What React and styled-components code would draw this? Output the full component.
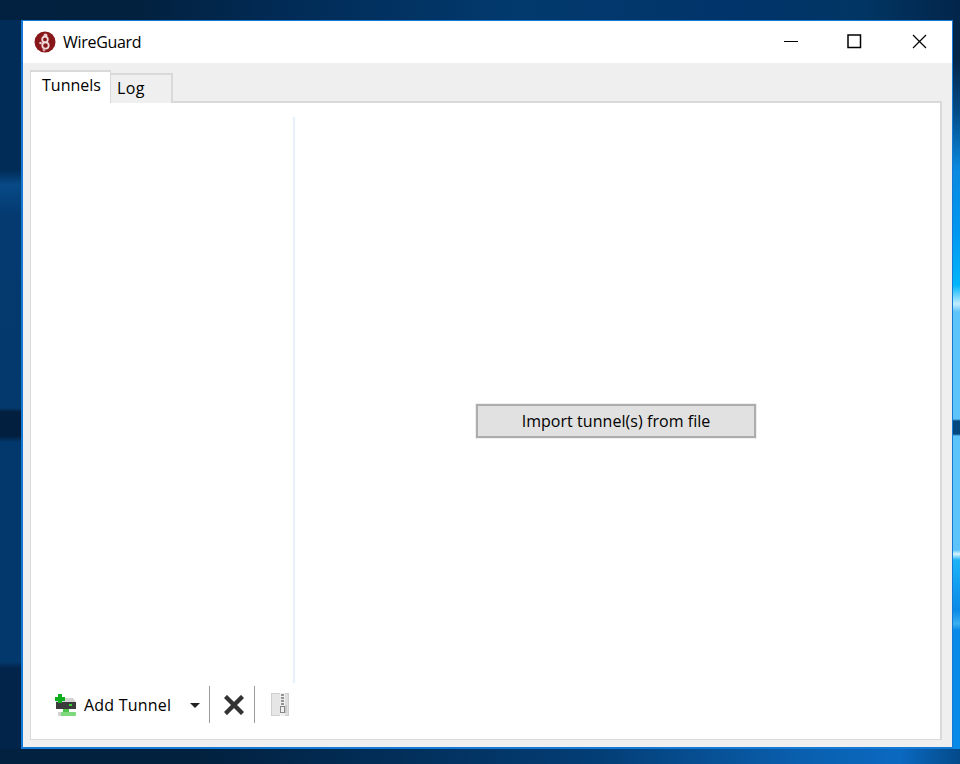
import styled, { createGlobalStyle } from 'styled-components';

const GlobalStyle = createGlobalStyle`
  html, body {
    margin: 0;
    height: 100%;
  }
  body {
    overflow: hidden;
    font-family: "Open Sans", "Noto Sans", sans-serif;
    color: #000;
    background:
      linear-gradient(90deg, #02203f 0, #02213f 140px, #012c58 300px, #023a6e 520px, #01346a 740px, #013664 860px, #02254a 960px) 0 0 / 100% 20px no-repeat,
      linear-gradient(90deg, #02203f 0, #02213f 200px, #022f5a 400px, #033e76 600px, #0a5fae 800px, #0a69c0 900px, #044a8a 960px) 0 100% / 100% 15px no-repeat,
      linear-gradient(180deg, #012c58 0, #012c58 170px, #074a86 185px, #043a70 215px, #03396b 408px, #021f3f 412px 436px, #03386c 442px, #03386c 662px, #02244a 668px) 0 0 / 21px 100% no-repeat,
      linear-gradient(180deg, #02254a 0, #02254a 60px, #034a85 110px, #0b8ae0 170px, #0096f0 230px, #00b5fa 285px, #c0ecff 304px, #5cc3fb 312px, #5cc4fb 419px, #03477f 421px 434px, #5cc3fb 436px, #5cc3fb 550px, #d8f4ff 554px, #1db4f7 560px, #0a8ae8 610px, #3bb0f0 624px, #0a8ae8 630px, #0a8ae8 749px, #034a8a 764px) 100% 0 / 7px 100% no-repeat,
      #03386c;
  }
`;

const Desktop = styled.div`
  box-sizing: border-box;
  width: 960px;
  height: 764px;
  padding: 20px 7px 15px 21px;
`;

const Window = styled.div`
  box-sizing: border-box;
  height: 100%;
  display: flex;
  flex-direction: column;
  background: #efefef;
  border: 2px solid #1479d4;
  border-width: 1px 1px 2px 2px;
`;

const TitleBar = styled.div`
  height: 42px;
  flex: none;
  display: flex;
  align-items: center;
  background: #fff;
  padding-left: 11px;
`;

const Title = styled.span`
  margin-left: 7px;
  font-size: 16px;
  letter-spacing: -0.3px;
`;

const Controls = styled.div`
  margin-left: auto;
  display: flex;
  box-sizing: border-box;
  height: 100%;
  padding-bottom: 2px;
`;

const ControlButton = styled.div`
  width: 65px;
  display: flex;
  align-items: center;
  justify-content: center;
`;

const Body = styled.div`
  flex: 1;
  min-height: 0;
  display: flex;
  flex-direction: column;
  padding: 7px 10px 7px 7px;
`;

const TabRow = styled.div`
  display: flex;
  align-items: flex-end;
  height: 33px;
  flex: none;
  position: relative;
  z-index: 1;
  margin-bottom: -2px;
`;

const Tab = styled.div`
  box-sizing: border-box;
  width: ${({ $width }) => $width}px;
  height: ${({ $active }) => ($active ? 33 : 30)}px;
  padding: ${({ $active }) => ($active ? '2px 0 0 11px' : '2px 0 0 6px')};
  font-size: 16px;
  letter-spacing: ${({ $active }) => ($active ? 0 : 0.4)}px;
  line-height: 22px;
  background: ${({ $active }) => ($active ? '#fff' : '#efefef')};
  border-top: 2px solid #d9d9d9;
  border-right: ${({ $active }) => ($active ? 1 : 2)}px solid #d9d9d9;
  border-left: ${({ $active }) => ($active ? '1px solid #d9d9d9' : 'none')};
`;

const Panel = styled.div`
  flex: 1;
  min-height: 0;
  display: flex;
  background: #fff;
  border: solid #d9d9d9;
  border-width: 2px 2px 1px 1px;
`;

const ListColumn = styled.div`
  width: 264px;
  flex: none;
  display: flex;
  flex-direction: column;
  padding-top: 14px;
  box-sizing: border-box;
`;

const ListPane = styled.div`
  flex: 1;
  min-height: 0;
  border-right: 2px solid #e8f1fa;
`;

const DetailPane = styled.div`
  flex: 1;
  display: flex;
  align-items: center;
  justify-content: center;
  padding-right: 3px;
`;

const ImportButton = styled.button`
  box-sizing: border-box;
  width: 280px;
  height: 34px;
  background: #e1e1e1;
  border: 2px solid #adadad;
  outline: 1px solid #efefef;
  font-family: inherit;
  font-size: 16px;
  letter-spacing: 0.05px;
  color: #000;
  padding: 0;
`;

const Toolbar = styled.div`
  box-sizing: border-box;
  height: 56px;
  flex: none;
  display: flex;
  align-items: flex-start;
  padding: 3px 0 0 24px;
`;

const ToolItem = styled.div`
  display: flex;
  align-items: center;
  height: 37px;
  flex: none;
`;

const ToolLabel = styled.span`
  margin-left: 8px;
  font-size: 16px;
  letter-spacing: 0.2px;
`;

const Caret = styled.span`
  margin-left: 19px;
  margin-top: 1px;
  width: 0;
  height: 0;
  border-left: 5px solid transparent;
  border-right: 5px solid transparent;
  border-top: 5px solid #222;
`;

const Divider = styled.div`
  width: 1px;
  height: 37px;
  flex: none;
  background: #9a9a9a;
  margin: ${({ $margin }) => $margin};
`;

const Logo = () => (
  <svg width="22" height="22" viewBox="0 0 22 22">
    <circle cx="11" cy="11" r="10.5" fill="#88171a" />
    <circle cx="11.5" cy="4.5" r="2" fill="#e8c9c9" />
    <circle cx="11" cy="8.5" r="2.8" fill="none" stroke="#f0dcdc" strokeWidth="1.8" />
    <circle cx="11.5" cy="14.5" r="3.2" fill="none" stroke="#f0dcdc" strokeWidth="1.8" />
    <circle cx="6.5" cy="12" r="1.3" fill="#e8c9c9" />
    <circle cx="10" cy="19" r="1.4" fill="#d9a9a9" />
  </svg>
);

const AddTunnelIcon = () => (
  <svg width="21" height="22" viewBox="0 0 21 22">
    <path d="M3 4h15l3 4H1z" fill="#d4d4d4" />
    <rect x="1" y="8" width="20" height="7" fill="#3b3b3b" />
    <rect x="14" y="10" width="3" height="2" fill="#39d639" />
    <rect x="8" y="15" width="6" height="3" fill="#4cc24c" />
    <rect x="3" y="18" width="18" height="4" rx="1" fill="#7ed87e" />
    <rect x="3" y="18" width="3" height="4" fill="#d2d2d2" />
    <path d="M3 3V0h4v3h3v4H7v2H3V7H0V3z" fill="#0fae1f" />
  </svg>
);

const DeleteIcon = () => (
  <svg width="20" height="20" viewBox="0 0 20 20">
    <path d="M3 3l14 14M17 3L3 17" stroke="#333" strokeWidth="4.4" strokeLinecap="square" />
  </svg>
);

const ExportIcon = () => (
  <svg width="18" height="23" viewBox="0 0 18 23">
    <rect x="0" y="0" width="18" height="23" fill="#cfcfcf" />
    <rect x="1" y="1" width="8" height="21" fill="#e6e6e6" />
    <rect x="14" y="1" width="3" height="21" fill="#dedede" />
    <rect x="9" y="0" width="5" height="23" fill="#efefef" />
    <path d="M10 2h3M10 5h3M10 8h3M10 11h3" stroke="#777" strokeWidth="1.5" />
    <rect x="9.5" y="13.5" width="4" height="6" fill="none" stroke="#858585" />
    <path d="M15 12v8" stroke="#b5b5b5" />
  </svg>
);

const App = () => (
  <>
    <GlobalStyle />
    <Desktop>
      <Window>
        <TitleBar>
          <Logo />
          <Title>WireGuard</Title>
          <Controls>
            <ControlButton>
              <svg width="19" height="15" viewBox="0 0 19 15"><path d="M4 7.5h14" stroke="#000" /></svg>
            </ControlButton>
            <ControlButton>
              <svg width="15" height="15" viewBox="0 0 15 15"><rect x="1" y="1" width="12.5" height="12.5" fill="none" stroke="#000" strokeWidth="1.5" /></svg>
            </ControlButton>
            <ControlButton>
              <svg width="15" height="15" viewBox="0 0 15 15"><path d="M1 1l13 13M14 1L1 14" stroke="#000" strokeWidth="1.2" /></svg>
            </ControlButton>
          </Controls>
        </TitleBar>
        <Body>
          <TabRow>
            <Tab $active $width={81}>Tunnels</Tab>
            <Tab $width={62}>Log</Tab>
          </TabRow>
          <Panel>
            <ListColumn>
              <ListPane />
              <Toolbar>
                <ToolItem>
                  <AddTunnelIcon />
                  <ToolLabel>Add Tunnel</ToolLabel>
                  <Caret />
                </ToolItem>
                <Divider $margin="0 14px 0 9px" />
                <ToolItem><DeleteIcon /></ToolItem>
                <Divider $margin="0 16px 0 10px" />
                <ToolItem><ExportIcon /></ToolItem>
              </Toolbar>
            </ListColumn>
            <DetailPane>
              <ImportButton>Import tunnel(s) from file</ImportButton>
            </DetailPane>
          </Panel>
        </Body>
      </Window>
    </Desktop>
  </>
);

export default App;
